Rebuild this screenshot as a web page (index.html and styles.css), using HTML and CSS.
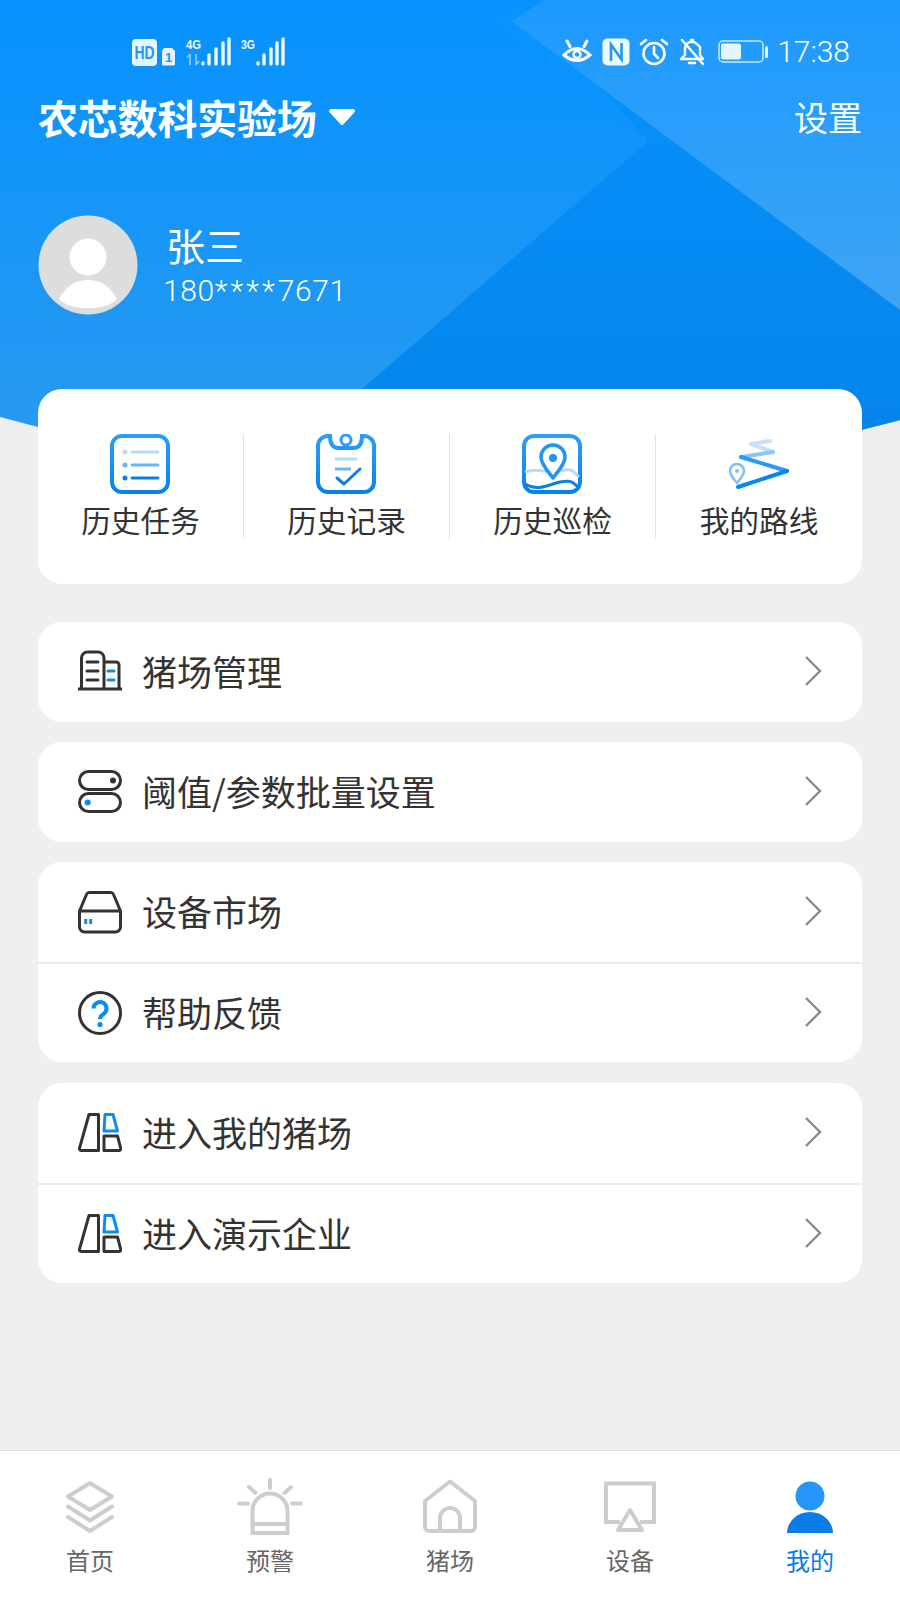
FILE: index.html
```html
<!DOCTYPE html>
<html lang="zh-CN">
<head>
<meta charset="utf-8">
<title>我的</title>
<link rel="stylesheet" href="styles.css">
</head>
<body>
<div class="phone">
  <header class="hero">
    <svg class="hero-bg" viewBox="0 0 900 520" width="900" height="520" aria-hidden="true">
      <defs>
        <linearGradient id="heroBase" x1="0" y1="0" x2="0" y2="1">
          <stop offset="0" stop-color="#0692ff"/><stop offset="1" stop-color="#2f9bec"/>
        </linearGradient>
        <linearGradient id="heroDark" x1="0" y1="0" x2="0" y2="1">
          <stop offset="0" stop-color="#0693ff"/><stop offset="1" stop-color="#0582e6"/>
        </linearGradient>
        <linearGradient id="heroLight" x1="0" y1="0" x2="0" y2="1">
          <stop offset="0" stop-color="#1d9aff"/><stop offset="1" stop-color="#3ea4f3"/>
        </linearGradient>
        <linearGradient id="iconBlue" x1="0" y1="0" x2="0" y2="1">
          <stop offset="0" stop-color="#2d9dfa"/><stop offset="1" stop-color="#0882ea"/>
        </linearGradient>
        <clipPath id="heroClip"><path d="M0 0H900V420Q450 540 0 417Z"/></clipPath>
      </defs>
      <g clip-path="url(#heroClip)">
        <rect width="900" height="520" fill="url(#heroBase)"/>
        <path d="M459 0L648 141L300 520H900V0Z" fill="#0a94ff" opacity=".55"/>
        <path d="M648 141L362 389L280 520H900V0H520Z" fill="url(#heroDark)"/>
        <path d="M545 0L511 21L900 310V0Z" fill="url(#heroLight)"/>
      </g>
    </svg>

    <div class="statusbar">
      <svg class="status-left" viewBox="0 0 160 32" width="160" height="32" aria-hidden="true">
        <rect x="2" y="3" width="25" height="27" rx="4" fill="#e6f4ff"/>
        <text x="4.500" y="23" class="st-hd" textLength="20" lengthAdjust="spacingAndGlyphs">HD</text>
        <path d="M34 12h8l3 3v13a1.500 1.500 0 0 1-1.500 1.500h-10a1.500 1.500 0 0 1-1.500-1.500v-13z" fill="#e6f4ff"/>
        <text x="38.500" y="26" class="st-one">1</text>
        <text x="56" y="13" class="st-g" textLength="15" lengthAdjust="spacingAndGlyphs">4G</text>
        <path d="M60 18v11M60 18l-3 4M66 29V18M66 29l3-4" stroke="#7cc3ff" stroke-width="2" fill="none"/>
        <g stroke="#eef8ff" stroke-width="3.400" stroke-linecap="round">
          <path d="M73 27v1M79 19v9M86 13v15M93 7v21M99 3v25"/>
        </g>
        <text x="111" y="13" class="st-g" textLength="14" lengthAdjust="spacingAndGlyphs">3G</text>
        <g stroke="#eef8ff" stroke-width="3.400" stroke-linecap="round">
          <path d="M128 27v1M134 19v9M141 13v15M147 7v21M153 3v25"/>
        </g>
      </svg>
      <div class="status-spacer"></div>
      <svg class="st-icon" viewBox="0 0 30 26" width="30" height="26" aria-hidden="true">
        <g fill="none" stroke="#fff" stroke-width="3">
          <path d="M2 16Q15 3 28 16Q15 27 2 16Z"/>
          <circle cx="15" cy="15.500" r="3.500" stroke-width="2.500"/>
          <path d="M5 2l3 5.500M25 2l-3 5.500" stroke-linecap="round"/>
        </g>
      </svg>
      <svg class="st-icon" viewBox="0 0 28 28" width="28" height="28" aria-hidden="true">
        <rect x="0.500" y="0.500" width="27" height="27" rx="5" fill="#eef8ff"/>
        <path d="M9 23V6.500L19.500 21.500V5" fill="none" stroke="#1d96f8" stroke-width="2.600"/>
      </svg>
      <svg class="st-icon" viewBox="0 0 30 28" width="30" height="28" aria-hidden="true">
        <g fill="none" stroke="#fff" stroke-width="2.600" stroke-linecap="round">
          <circle cx="15" cy="15.500" r="10.500"/><path d="M15 9v7l4 4M2 6l5-4M28 6l-5-4"/>
        </g>
      </svg>
      <svg class="st-icon" viewBox="0 0 26 28" width="26" height="28" aria-hidden="true">
        <g fill="none" stroke="#fff" stroke-width="2.400" stroke-linecap="round" stroke-linejoin="round">
          <path d="M6 10a7 7 0 0 1 12-4l3 3v8l3 4H2l4-4z"/><path d="M10 25h6M12 2h2M3 2l21 24"/>
        </g>
      </svg>
      <svg class="st-battery" viewBox="0 0 50 24" width="50" height="24" aria-hidden="true">
        <rect x="1" y="1" width="44" height="21" rx="4" fill="none" stroke="#c9e7ff" stroke-width="1.500"/>
        <rect x="3" y="3.500" width="20" height="16" rx="2" fill="#e6f4ff"/>
        <rect x="47" y="6" width="3" height="12" rx="1.500" fill="#e6f4ff"/>
      </svg>
      <span class="st-time">17:38</span>
    </div>

    <div class="title-row">
      <div class="farm">
        <span class="farm-name">农芯数科实验场</span>
        <svg class="farm-caret" viewBox="0 0 28 18" width="28" height="18" aria-hidden="true"><path d="M3 3H25L14 15Z" fill="#fff" stroke="#fff" stroke-width="4" stroke-linejoin="round"/></svg>
      </div>
      <span class="settings">设置</span>
    </div>

    <div class="profile">
      <svg class="avatar" viewBox="0 0 100 100" width="100" height="100" aria-hidden="true">
        <circle cx="50" cy="50" r="49.500" fill="#dcdddd"/>
        <circle cx="50" cy="42" r="18.500" fill="#fff"/>
        <path d="M21 84C27 72 37 65 50 65S73 72 79 84C72 91 62 93 50 93S28 91 21 84Z" fill="#fff"/>
      </svg>
      <div class="profile-text">
        <div class="user-name">张三</div>
        <div class="user-phone">180<span class="mask">****</span>7671</div>
      </div>
    </div>
  </header>

  <main class="content">
    <section class="tools">
      <div class="tool">
        <svg class="tool-icon" viewBox="0 0 60 60" width="60" height="60" aria-hidden="true">
          <rect x="2" y="2" width="56" height="56" rx="10" fill="#fff" stroke="url(#iconBlue)" stroke-width="4"/>
          <g stroke-width="3" stroke-linecap="round">
            <path d="M22 18H48" stroke="#b5dbfc"/><path d="M22 31H48" stroke="#6db6f4"/><path d="M22 44H48" stroke="#0a7fe6"/>
          </g>
          <circle cx="15" cy="18" r="2.500" fill="#b5dbfc"/><circle cx="15" cy="31" r="2.500" fill="#6db6f4"/><circle cx="15" cy="44" r="2.500" fill="#0a7fe6"/>
        </svg>
        <span class="tool-label">历史任务</span>
      </div>
      <div class="tool">
        <svg class="tool-icon" viewBox="0 0 60 60" width="60" height="60" aria-hidden="true">
          <path d="M14 2H12A10 10 0 0 0 2 12V48A10 10 0 0 0 12 58H48A10 10 0 0 0 58 48V12A10 10 0 0 0 48 2H46C46 10 43 14 37 14H23C17 14 14 10 14 2Z" fill="#fff" stroke="url(#iconBlue)" stroke-width="4"/>
          <circle cx="30" cy="6" r="5" fill="none" stroke="#2d9dfa" stroke-width="3"/>
          <path d="M19 25H41" stroke="#b5dbfc" stroke-width="3"/><path d="M19 35H35" stroke="#6db6f4" stroke-width="3"/>
          <path d="M21 44L28 50L44 35" fill="none" stroke="#0a7fe6" stroke-width="3" stroke-linecap="round" stroke-linejoin="round"/>
        </svg>
        <span class="tool-label">历史记录</span>
      </div>
      <div class="tool">
        <svg class="tool-icon" viewBox="0 0 60 60" width="60" height="60" aria-hidden="true">
          <rect x="2" y="2" width="56" height="56" rx="10" fill="#fff" stroke="url(#iconBlue)" stroke-width="4"/>
          <path d="M3 38C16 33 26 40 38 37S50 36 57 43" fill="none" stroke="#b5dbfc" stroke-width="3"/>
          <path d="M3 50C16 58 28 50 38 48S50 47 57 54" fill="none" stroke="#0a7fe6" stroke-width="3"/>
          <path d="M31 44C25 36 19 30 19 23A12 12 0 0 1 43 23C43 30 37 36 31 44Z" fill="#fff" stroke="#1f95f5" stroke-width="3.500" stroke-linejoin="round"/>
          <circle cx="31" cy="24" r="4" fill="#1f95f5"/>
        </svg>
        <span class="tool-label">历史巡检</span>
      </div>
      <div class="tool">
        <svg class="tool-icon tool-icon-route" viewBox="0 0 60 60" width="60" height="60" aria-hidden="true">
          <g fill="none" stroke-width="4" stroke-linecap="round" stroke-linejoin="round">
            <path d="M41 7L22 10L44 18" stroke="#c4e1fc"/>
            <path d="M12 23L44 18" stroke="#8cc6f8"/>
            <path d="M12 23L58 37" stroke="#2b98f5"/>
            <path d="M58 37L9 53" stroke="#0a84ee"/>
          </g>
          <path d="M8 49C4 44 1 41 1 37A7 7 0 0 1 15 37C15 41 12 44 8 49Z" fill="#fff" stroke="#7cc0f8" stroke-width="2.500"/>
          <circle cx="8" cy="37" r="2" fill="#7cc0f8"/>
        </svg>
        <span class="tool-label">我的路线</span>
      </div>
    </section>

    <section class="card">
      <div class="row">
        <svg class="row-icon" viewBox="0 0 44 44" width="44" height="44" aria-hidden="true">
          <g fill="none" stroke="#333" stroke-width="3" stroke-linecap="round">
            <path d="M0.500 39H43.500M3.500 39V8A6 6 0 0 1 9.500 2H20A6 6 0 0 1 26 8V39M26 12H38A3 3 0 0 1 41 15V39M9 12H20M9 21H20M9 30H20"/>
          </g>
          <path d="M30 21H36M30 30H36" stroke="#0a8cf0" stroke-width="3" stroke-linecap="round"/>
        </svg>
        <span class="row-label">猪场管理</span>
        <svg class="chev" viewBox="0 0 20 32" width="20" height="32" aria-hidden="true"><path d="M3 2L17 16L3 30" fill="none" stroke="#8a8a8a" stroke-width="2.400"/></svg>
      </div>
    </section>

    <section class="card">
      <div class="row">
        <svg class="row-icon" viewBox="0 0 44 44" width="44" height="44" aria-hidden="true">
          <g fill="none" stroke="#333" stroke-width="3">
            <rect x="1.500" y="1.500" width="41" height="18" rx="9"/><rect x="1.500" y="23.500" width="41" height="18" rx="9"/>
          </g>
          <circle cx="35" cy="10.500" r="3" fill="#333"/><circle cx="9.700" cy="32.500" r="3" fill="#0a8cf0"/>
        </svg>
        <span class="row-label">阈值/参数批量设置</span>
        <svg class="chev" viewBox="0 0 20 32" width="20" height="32" aria-hidden="true"><path d="M3 2L17 16L3 30" fill="none" stroke="#8a8a8a" stroke-width="2.400"/></svg>
      </div>
    </section>

    <section class="card">
      <div class="row">
        <svg class="row-icon" viewBox="0 0 44 44" width="44" height="44" aria-hidden="true">
          <path d="M11 2.500H33A3 3 0 0 1 35.500 4.500L42.500 21V37A5 5 0 0 1 37.500 42H6.500A5 5 0 0 1 1.500 37V21L8.500 4.500A3 3 0 0 1 11 2.500ZM1.500 21H42.500" fill="none" stroke="#333" stroke-width="3" stroke-linejoin="round"/>
          <path d="M7.700 29V34M12.700 29V34" stroke="#0a8cf0" stroke-width="3"/>
        </svg>
        <span class="row-label">设备市场</span>
        <svg class="chev" viewBox="0 0 20 32" width="20" height="32" aria-hidden="true"><path d="M3 2L17 16L3 30" fill="none" stroke="#8a8a8a" stroke-width="2.400"/></svg>
      </div>
      <div class="row">
        <svg class="row-icon" viewBox="0 0 44 44" width="44" height="44" aria-hidden="true">
          <circle cx="22" cy="22" r="20.500" fill="none" stroke="#333" stroke-width="3"/>
          <path d="M15.500 17.500A6.500 6.500 0 1 1 25.500 23C23 24.600 22 26 22 28" fill="none" stroke="#0a8cf0" stroke-width="4"/>
          <circle cx="22" cy="33.500" r="2.600" fill="#0a8cf0"/>
        </svg>
        <span class="row-label">帮助反馈</span>
        <svg class="chev" viewBox="0 0 20 32" width="20" height="32" aria-hidden="true"><path d="M3 2L17 16L3 30" fill="none" stroke="#8a8a8a" stroke-width="2.400"/></svg>
      </div>
    </section>

    <section class="card card-last">
      <div class="row">
        <svg class="row-icon" viewBox="0 0 44 44" width="44" height="44" aria-hidden="true">
          <g fill="none" stroke="#333" stroke-width="3" stroke-linejoin="round">
            <path d="M11 3.500H20.500V39.500H3A1.800 1.800 0 0 1 1.400 37.500Z"/>
            <path d="M26 25H39.500L42.800 37.500A1.800 1.800 0 0 1 41 39.500H26Z"/>
          </g>
          <path d="M27 3.500H35L39.500 20H26Z" fill="none" stroke="#0a8cf0" stroke-width="3" stroke-linejoin="round"/>
        </svg>
        <span class="row-label">进入我的猪场</span>
        <svg class="chev" viewBox="0 0 20 32" width="20" height="32" aria-hidden="true"><path d="M3 2L17 16L3 30" fill="none" stroke="#8a8a8a" stroke-width="2.400"/></svg>
      </div>
      <div class="row">
        <svg class="row-icon" viewBox="0 0 44 44" width="44" height="44" aria-hidden="true">
          <g fill="none" stroke="#333" stroke-width="3" stroke-linejoin="round">
            <path d="M11 3.500H20.500V39.500H3A1.800 1.800 0 0 1 1.400 37.500Z"/>
            <path d="M26 25H39.500L42.800 37.500A1.800 1.800 0 0 1 41 39.500H26Z"/>
          </g>
          <path d="M27 3.500H35L39.500 20H26Z" fill="none" stroke="#0a8cf0" stroke-width="3" stroke-linejoin="round"/>
        </svg>
        <span class="row-label">进入演示企业</span>
        <svg class="chev" viewBox="0 0 20 32" width="20" height="32" aria-hidden="true"><path d="M3 2L17 16L3 30" fill="none" stroke="#8a8a8a" stroke-width="2.400"/></svg>
      </div>
    </section>
  </main>

  <nav class="tabbar">
    <div class="tab">
      <svg class="tab-icon" viewBox="-5 0 70 60" width="70" height="60" aria-hidden="true">
        <path d="M30 5L52 18.500L30 32L8 18.500ZM8 28.500L30 42.500L52 28.500M8 39L30 53L52 39" fill="none" stroke="#cdcdcd" stroke-width="4" stroke-linecap="round" stroke-linejoin="round"/>
      </svg>
      <span class="tab-label">首页</span>
    </div>
    <div class="tab">
      <svg class="tab-icon" viewBox="-5 0 70 60" width="70" height="60" aria-hidden="true">
        <path d="M12.500 55V33A17.500 17.500 0 0 1 47.500 33V55ZM12.500 46H47.500" fill="none" stroke="#cdcdcd" stroke-width="4"/>
        <path d="M30 2V10M9 9L15.500 15M51 9L44.500 15M-1 25.500H8M52 25.500H61" fill="none" stroke="#cdcdcd" stroke-width="4" stroke-linecap="round"/>
      </svg>
      <span class="tab-label">预警</span>
    </div>
    <div class="tab">
      <svg class="tab-icon" viewBox="-5 0 70 60" width="70" height="60" aria-hidden="true">
        <path d="M30 3.500L55 23V49A4 4 0 0 1 51 53H9A4 4 0 0 1 5 49V23ZM20 53V40A10 10 0 0 1 40 40V53" fill="none" stroke="#cdcdcd" stroke-width="4" stroke-linejoin="round"/>
      </svg>
      <span class="tab-label">猪场</span>
    </div>
    <div class="tab">
      <svg class="tab-icon" viewBox="-5 0 70 60" width="70" height="60" aria-hidden="true">
        <path d="M20 44H6V5.500H54V44H40" fill="none" stroke="#cdcdcd" stroke-width="4"/>
        <path d="M30 32L42 52H18Z" fill="none" stroke="#cdcdcd" stroke-width="4" stroke-linejoin="round"/>
      </svg>
      <span class="tab-label">设备</span>
    </div>
    <div class="tab tab-active">
      <svg class="tab-icon" viewBox="-5 0 70 60" width="70" height="60" aria-hidden="true">
        <circle cx="30" cy="18" r="14.500" fill="#2596f7"/>
        <path d="M7 55A23 21 0 0 1 53 55Z" fill="#0a7ce6"/>
      </svg>
      <span class="tab-label">我的</span>
    </div>
  </nav>
</div>
</body>
</html>
```

FILE: styles.css
```css
* { box-sizing: border-box; }
html, body { margin: 0; padding: 0; }
body {
  background: #efefef;
  font-family: "Noto Sans CJK SC", "Noto Sans", sans-serif;
  color: #333;
}
.phone {
  width: 900px;
  height: 1600px;
  display: flex;
  flex-direction: column;
  overflow: hidden;
  background: #efefef;
}

/* hero */
.hero {
  position: relative;
  height: 389px;
  color: #fff;
  display: flex;
  flex-direction: column;
}
.hero-bg { position: absolute; left: 0; top: 0; }
.statusbar {
  position: relative;
  display: flex;
  align-items: center;
  height: 32px;
  margin-top: 36px;
  padding: 0 50px 0 130px;
}
.status-left { flex: none; }
.status-spacer { flex: 1; }
.st-icon { flex: none; margin-right: 9.500px; }
.st-battery { flex: none; margin-left: 4px; margin-right: 9px; }
.st-time {
  font-family: Roboto, sans-serif;
  font-weight: 300;
  font-size: 30px;
  line-height: 32px;
  color: #fff;
}
.st-hd { font: 700 18px "Liberation Sans", sans-serif; fill: #1d96f8; }
.st-one { font: 700 13px "Liberation Sans", sans-serif; fill: #1d96f8; text-anchor: middle; }
.st-g { font: 700 13px "Liberation Sans", sans-serif; fill: #eef8ff; }

.title-row {
  position: relative;
  display: flex;
  align-items: center;
  justify-content: space-between;
  padding: 0 38px 0 38px;
  margin-top: 20px;
  height: 58px;
}
.farm { display: flex; align-items: center; gap: 11px; }
.farm-name { font-size: 40px; font-weight: 700; line-height: 58px; letter-spacing: -.2px; }
.farm-caret { flex: none; margin-top: 0; }
.settings { font-size: 34px; line-height: 58px; }

.profile {
  position: relative;
  display: flex;
  align-items: center;
  margin-top: 69px;
  padding-left: 38px;
}
.avatar { flex: none; }
.profile-text { margin-left: 25px; }
.user-name { font-size: 39px; line-height: 50px; margin: -3px 0 0 3px; }
.user-phone { font-family: Roboto, sans-serif; font-weight: 300; font-size: 30px; line-height: 36px; margin-top: 4px; letter-spacing: .6px; }
.mask { letter-spacing: 3px; }

/* content */
.content {
  position: relative;
  flex: 1;
  padding: 0 38px;
  display: flex;
  flex-direction: column;
  gap: 20px;
}
.tools {
  display: grid;
  grid-template-columns: repeat(4, 1fr);
  height: 195px;
  background: #fff;
  border-radius: 24px;
  padding: 45px 0 45px;
  margin-bottom: 18px;
}
.tool {
  display: flex;
  flex-direction: column;
  align-items: center;
  height: 105px;
  border-right: 1px solid #e2e2e2;
}
.tool:last-child { border-right: 0; }
.tool-icon { flex: none; margin-right: 2px; }
.tool-icon-route { margin-right: 0; }
.tool-label { font-size: 29.700px; line-height: 44px; margin-top: 4px; color: #333; }

.card {
  background: #fff;
  border-radius: 24px;
  overflow: hidden;
}
.card-last { margin-top: 1px; }
.row {
  display: flex;
  align-items: center;
  height: 100px;
  padding: 0 39px 0 40px;
}
.row + .row { border-top: 2px solid #ececec; }
.row-icon { flex: none; }
.row-label { flex: 1; margin: -3px 0 0 20px; font-size: 35px; line-height: 50px; color: #333; }
.chev { flex: none; margin-top: -2px; }

/* tab bar */
.tabbar {
  flex: none;
  display: grid;
  grid-template-columns: repeat(5, 1fr);
  height: 150px;
  background: #fff;
  border-top: 1px solid #dcdcdc;
}
.tab {
  display: flex;
  flex-direction: column;
  align-items: center;
  padding-top: 27px;
}
.tab-icon { flex: none; }
.tab-label { font-size: 24px; line-height: 34px; margin-top: 5px; color: #666; }
.tab-active .tab-label { color: #0a7ce6; }
```
